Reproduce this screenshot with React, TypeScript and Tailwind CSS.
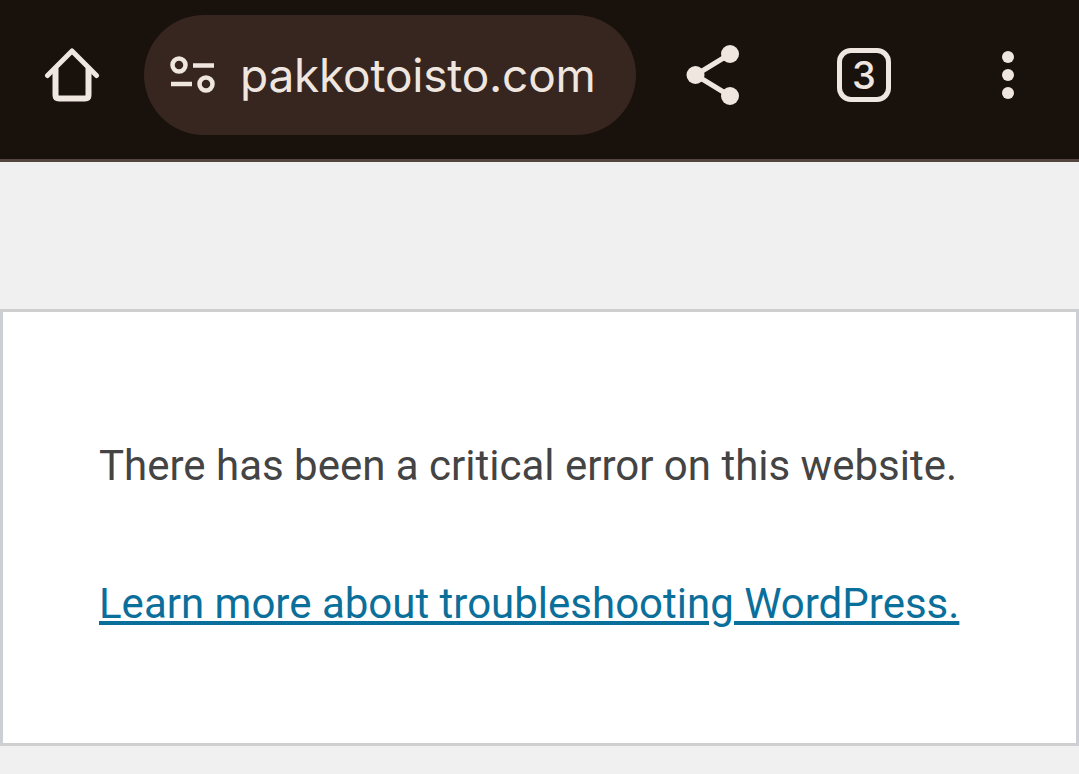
import React from "react";

function HomeIcon() {
  return (
    <svg width="56" height="56" viewBox="0 0 56 56" fill="none" stroke="#f0e6e0" strokeLinejoin="round" strokeLinecap="round">
      <path d="M3.500 28.500 L28 4 L52.500 28.500" strokeWidth="5" />
      <path d="M11.500 22 V48 Q11.500 51.500 15 51.500 H41 Q44.500 51.500 44.500 48 V22" strokeWidth="6" />
    </svg>
  );
}

function SiteSettingsIcon() {
  return (
    <svg width="46" height="38" viewBox="0 0 46 38" fill="none" stroke="#f0e6e0" strokeWidth="4.500">
      <circle cx="9" cy="9" r="6.500" />
      <path d="M23 9.500 H44" />
      <path d="M1 28 H22" />
      <circle cx="36" cy="28" r="6.500" />
    </svg>
  );
}

function ShareIcon() {
  return (
    <svg width="56" height="62" viewBox="0 0 56 62" fill="#f0e6e0" stroke="none">
      <circle cx="44" cy="10" r="9" />
      <circle cx="9.500" cy="31" r="9" />
      <circle cx="44" cy="52" r="9" />
      <path d="M44 10 L9.500 31 L44 52" fill="none" stroke="#f0e6e0" strokeWidth="5" />
    </svg>
  );
}

export default function App() {
  return (
    <div className="h-[774px] w-[1079px] overflow-hidden bg-[#f0f0f1] font-['Roboto',sans-serif]">
      {/* Browser toolbar */}
      <div className="flex h-[162px] items-start border-b-[3px] border-[#54463f] bg-[#19110c]">
        <div className="ml-[44px] mt-[47px] flex h-[56px] w-[56px] items-center justify-center">
          <HomeIcon />
        </div>
        <div className="ml-[44px] mt-[15px] flex h-[120px] w-[492px] items-center rounded-[60px] bg-[#36261f] pl-[26px]">
          <SiteSettingsIcon />
          <span className="ml-[24px] font-['Inter',sans-serif] text-[46px] leading-none tracking-[-0.2px] text-[#f0e6e0]">pakkotoisto.com</span>
        </div>
        <div className="ml-[50px] mt-[44px]">
          <ShareIcon />
        </div>
        <div className="ml-[95px] mt-[48px] flex h-[54px] w-[54px] items-center justify-center rounded-[14px] border-[5px] border-[#f0e6e0] font-['Inter',sans-serif] text-[38px] font-medium leading-none text-[#f0e6e0]">
          3
        </div>
        <div className="ml-[111px] mt-[51px] flex flex-col gap-[6px]">
          <div className="h-[12px] w-[12px] rounded-full bg-[#f0e6e0]" />
          <div className="h-[12px] w-[12px] rounded-full bg-[#f0e6e0]" />
          <div className="h-[12px] w-[12px] rounded-full bg-[#f0e6e0]" />
        </div>
      </div>

      {/* Error card */}
      <div className="mt-[147px] h-[437px] w-[1079px] border-[3px] border-[#ccd0d4] border-t-[#cfcfcf] border-b-[#cfcfcf] bg-white pl-[96px] pt-[129px]">
        <p className="text-[42px] leading-[50px] text-[#444444]">There has been a critical error on this website.</p>
        <p className="mt-[88px] text-[42px] leading-[50px] text-[#0a6f9a]">
          <a href="#" className="underline">Learn more about troubleshooting WordPress.</a>
        </p>
      </div>
    </div>
  );
}
